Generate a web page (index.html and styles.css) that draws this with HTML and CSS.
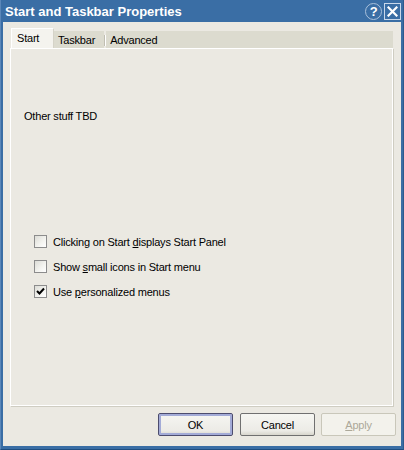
FILE: index.html
```html
<!DOCTYPE html>
<html>
<head>
<meta charset="utf-8">
<link rel="stylesheet" href="styles.css">
</head>
<body>
<div class="window">
  <div class="titlebar">
    <span class="title">Start and Taskbar Properties</span>
    <div class="title-buttons">
      <span class="tbtn help">?</span>
      <span class="tbtn close">
        <svg width="11" height="11" viewBox="0 0 11 11"><path d="M1.5 1.5 L9.5 9.5 M9.5 1.5 L1.5 9.5" stroke="#fff" stroke-width="2.2" stroke-linecap="square"/></svg>
      </span>
    </div>
  </div>
  <div class="client">
    <div class="tabs">
      <div class="tab selected">Start</div>
      <div class="tab">Taskbar</div>
      <div class="tab-sep"></div>
      <div class="tab">Advanced</div>
      <div class="tab-fill"></div>
    </div>
    <div class="panel">
      <div class="note">Other stuff TBD</div>
      <div class="options">
        <label class="opt"><span class="box"></span><span>Clicking on Start <u>d</u>isplays Start Panel</span></label>
        <label class="opt"><span class="box"></span><span>Show <u>s</u>mall icons in Start menu</span></label>
        <label class="opt"><span class="box checked"><svg width="9" height="9" viewBox="0 0 9 9"><path d="M1 4 L3.5 6.5 L8 1.5" stroke="#000" stroke-width="2" fill="none"/></svg></span><span>Use <u>p</u>ersonalized menus</span></label>
      </div>
    </div>
    <div class="buttons">
      <button class="btn default">OK</button>
      <button class="btn">Cancel</button>
      <button class="btn disabled"><u>A</u>pply</button>
    </div>
  </div>
</div>
</body>
</html>
```
FILE: styles.css
```css
html, body {
  margin: 0;
  padding: 0;
}
body {
  width: 404px;
  height: 450px;
  overflow: hidden;
  font-family: "Liberation Sans", Arial, sans-serif;
  font-size: 11px;
  letter-spacing: -0.2px;
  color: #000;
}
.window {
  width: 404px;
  height: 450px;
  box-sizing: border-box;
  background: #3a6ea5;
  border-left: 1px solid #5b87b9;
  border-right: 1px solid #2c5a8c;
  border-bottom: 1px solid #1f4e80;
  padding: 0 2px 3px 2px;
  display: flex;
  flex-direction: column;
}
.titlebar {
  height: 22px;
  flex: none;
  display: flex;
  align-items: center;
  justify-content: space-between;
  padding-left: 2px;
}
.title {
  color: #fff;
  font-weight: bold;
  font-size: 13px;
  letter-spacing: 0;
  font-family: "Liberation Sans", Arial, sans-serif;
}
.title-buttons {
  display: flex;
  gap: 2px;
  align-items: center;
}
.tbtn {
  display: flex;
  align-items: center;
  justify-content: center;
  color: #fff;
  box-sizing: border-box;
}
.help {
  width: 17px;
  height: 17px;
  border: 1px solid #a9c1dc;
  border-radius: 50%;
  font-weight: bold;
  font-size: 13px;
}
.close {
  width: 17px;
  height: 17px;
  border: 1px solid #c9d8ea;
}
.client {
  flex: 1;
  background: #ebe9e2;
  display: flex;
  flex-direction: column;
  padding: 6px 8px 0 7px;
}
.tabs {
  display: flex;
  align-items: flex-end;
  height: 20px;
  flex: none;
  margin-left: 1px;
}
.tab {
  height: 17px;
  background: #dcdbcf;
  padding: 0 9px 0 4px;
  line-height: 18px;
}
.tab.selected {
  box-sizing: border-box;
  width: 43px;
  height: 20px;
  line-height: 19px;
  background: #f4f3ee;
  border-top: 1px solid #fff;
  border-left: 1px solid #fff;
  border-right: 1px solid #d5d3c8;
  padding: 0 0 0 5px;
  position: relative;
  z-index: 1;
}
.tab-sep {
  width: 1px;
  height: 11px;
  align-self: center;
  margin-top: 4px;
  background: #fff;
  border-left: 1px solid #c0beb2;
}
.tab-fill {
  flex: 1;
  height: 17px;
  background: #dcdbcf;
}
.panel {
  height: 358px;
  flex: none;
  box-sizing: border-box;
  border: 1px solid #fff;
  box-shadow: 1px 1px 0 #cfcdc2;
  background: #ebe9e2;
  display: flex;
  flex-direction: column;
}
.note {
  margin-top: 61px;
  margin-left: 13px;
}
.options {
  margin-top: 113px;
  margin-left: 23px;
  display: flex;
  flex-direction: column;
  gap: 12px;
}
.opt {
  display: flex;
  align-items: center;
  gap: 6px;
  height: 13px;
}
.box {
  width: 13px;
  height: 13px;
  box-sizing: border-box;
  border: 1px solid #8c8c8c;
  background: linear-gradient(135deg, #dcdcd6 0%, #f4f4f0 60%, #fff 100%);
  display: flex;
  align-items: center;
  justify-content: center;
}
.buttons {
  display: flex;
  justify-content: flex-end;
  gap: 6px;
  margin-top: 7px;
  margin-right: -3px;
}
.btn {
  width: 75px;
  height: 23px;
  font-family: "Liberation Sans", Arial, sans-serif;
  font-size: 11px;
  letter-spacing: -0.2px;
  color: #000;
  background: linear-gradient(#f6f6f2, #ecebe6 80%, #d8d6cd);
  border: 1px solid #707070;
  border-radius: 2px;
  padding: 0;
}
.btn.default {
  margin-right: 1px;
  border-color: #4c4c6e;
  box-shadow: inset 0 0 0 2px #a3abd7;
}
.btn.disabled {
  color: #aca899;
  border-color: #c9c7ba;
  background: #f3f2ec;
}
```
